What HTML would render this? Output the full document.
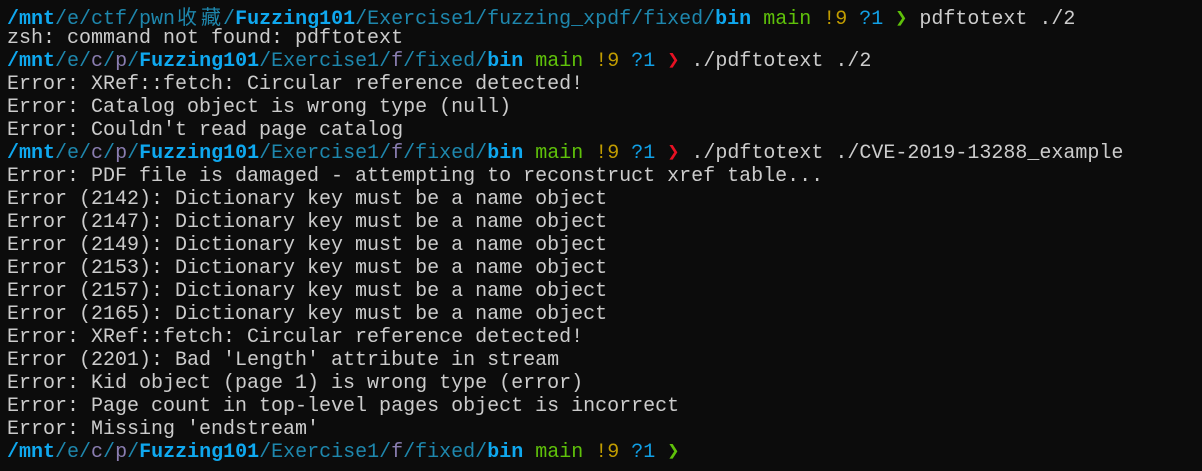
<!DOCTYPE html>
<html><head><meta charset="utf-8"><style>
html,body{margin:0;padding:0;background:#0c0c0c;width:1202px;height:471px;overflow:hidden}
.l{position:absolute;left:7px;white-space:pre;font-family:"Liberation Mono","Noto Sans CJK SC",monospace;font-size:20px;line-height:23px;color:#cccccc}
.B{color:#0fa8ef;font-weight:bold}
.t{color:#1e87ad}
.p{color:#8a7db0}
.g{color:#5fc10a}
.y{color:#c19c00}
.c{color:#11a0e6}
.r{color:#e81123}
.k{display:inline-block;width:24px;text-align:center;font-family:"Noto Sans CJK SC",sans-serif;font-size:20px}
</style></head><body>
<div class="l" style="top:-19px">                                                                              </div>
<div class="l" style="top:4px"><span class="B">/mnt</span><span class="t">/e/ctf/pwn<span class="k">收</span><span class="k">藏</span>/</span><span class="B">Fuzzing101</span><span class="t">/Exercise1/fuzzing_xpdf/fixed/</span><span class="B">bin</span> <span class="g">main</span> <span class="y">!9</span> <span class="c">?1</span> <span class="g">❯</span> pdftotext ./2</div>
<div class="l" style="top:27px">zsh: command not found: pdftotext</div>
<div class="l" style="top:50px"><span class="B">/mnt</span><span class="t">/e/</span><span class="p">c</span><span class="t">/</span><span class="p">p</span><span class="t">/</span><span class="B">Fuzzing101</span><span class="t">/Exercise1/</span><span class="p">f</span><span class="t">/fixed/</span><span class="B">bin</span> <span class="g">main</span> <span class="y">!9</span> <span class="c">?1</span> <span class="r">❯</span> ./pdftotext ./2</div>
<div class="l" style="top:73px">Error: XRef::fetch: Circular reference detected!</div>
<div class="l" style="top:96px">Error: Catalog object is wrong type (null)</div>
<div class="l" style="top:119px">Error: Couldn't read page catalog</div>
<div class="l" style="top:142px"><span class="B">/mnt</span><span class="t">/e/</span><span class="p">c</span><span class="t">/</span><span class="p">p</span><span class="t">/</span><span class="B">Fuzzing101</span><span class="t">/Exercise1/</span><span class="p">f</span><span class="t">/fixed/</span><span class="B">bin</span> <span class="g">main</span> <span class="y">!9</span> <span class="c">?1</span> <span class="r">❯</span> ./pdftotext ./CVE-2019-13288_example</div>
<div class="l" style="top:165px">Error: PDF file is damaged - attempting to reconstruct xref table...</div>
<div class="l" style="top:188px">Error (2142): Dictionary key must be a name object</div>
<div class="l" style="top:211px">Error (2147): Dictionary key must be a name object</div>
<div class="l" style="top:234px">Error (2149): Dictionary key must be a name object</div>
<div class="l" style="top:257px">Error (2153): Dictionary key must be a name object</div>
<div class="l" style="top:280px">Error (2157): Dictionary key must be a name object</div>
<div class="l" style="top:303px">Error (2165): Dictionary key must be a name object</div>
<div class="l" style="top:326px">Error: XRef::fetch: Circular reference detected!</div>
<div class="l" style="top:349px">Error (2201): Bad 'Length' attribute in stream</div>
<div class="l" style="top:372px">Error: Kid object (page 1) is wrong type (error)</div>
<div class="l" style="top:395px">Error: Page count in top-level pages object is incorrect</div>
<div class="l" style="top:418px">Error: Missing 'endstream'</div>
<div class="l" style="top:441px"><span class="B">/mnt</span><span class="t">/e/</span><span class="p">c</span><span class="t">/</span><span class="p">p</span><span class="t">/</span><span class="B">Fuzzing101</span><span class="t">/Exercise1/</span><span class="p">f</span><span class="t">/fixed/</span><span class="B">bin</span> <span class="g">main</span> <span class="y">!9</span> <span class="c">?1</span> <span class="g">❯</span></div>
</body></html>
